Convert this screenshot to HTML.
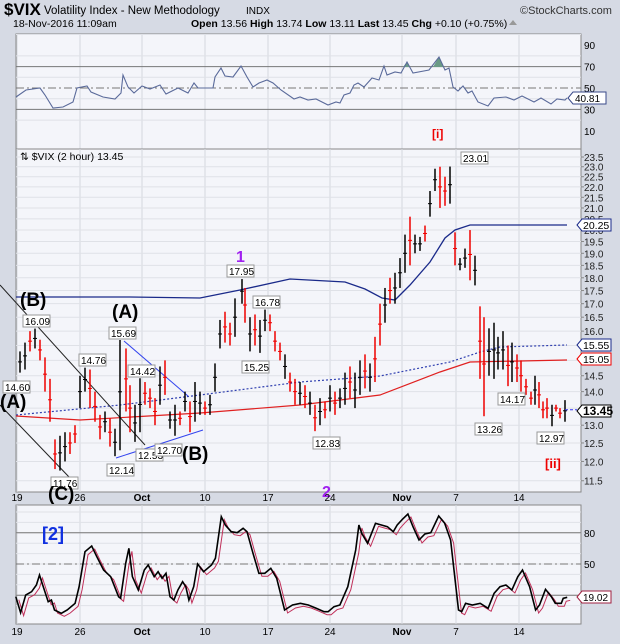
<!DOCTYPE html>
<html><head><meta charset="utf-8"><style>
body{margin:0;background:#d6dae4;width:620px;height:639px;overflow:hidden;font-family:"Liberation Sans",sans-serif}
svg text{font-family:"Liberation Sans",sans-serif}
</style></head><body>
<svg id="s" width="620" height="639" xmlns="http://www.w3.org/2000/svg">
<rect width="620" height="639" fill="#d6dae4"/>
<text x="4" y="15" font-size="17" font-weight="bold" fill="#000">$VIX</text>
<text x="44" y="14" font-size="11.5" fill="#000">Volatility Index - New Methodology</text>
<text x="246" y="14" font-size="10" fill="#000">INDX</text>
<text x="520" y="14" font-size="11" fill="#333">©StockCharts.com</text>
<text x="13" y="27" font-size="10.5" fill="#000">18-Nov-2016 11:09am</text>
<text x="191" y="27" font-size="10.5" fill="#000"><tspan font-weight="bold">Open</tspan> 13.56 <tspan font-weight="bold">High</tspan> 13.74 <tspan font-weight="bold">Low</tspan> 13.11 <tspan font-weight="bold">Last</tspan> 13.45 <tspan font-weight="bold">Chg</tspan> +0.10 (+0.75%)</text>
<polygon points="509,25 517,25 513,20" fill="#999"/>
<g id="g"></g>
</svg>
<script>
const g=document.getElementById('g');let h='';
const L=16,R=581;
const xs=[[17,'19'],[80,'26'],[142,'Oct'],[205,'10'],[268,'17'],[330,'24'],[402,'Nov'],[456,'7'],[519,'14']];
function panel(y0,y1){h+=`<rect x="${L}" y="${y0}" width="${R-L}" height="${y1-y0}" fill="#f4f5fa" stroke="#888"/>`;
 xs.forEach(([x])=>h+=`<line x1="${x}" y1="${y0}" x2="${x}" y2="${y1}" stroke="#d4d7de"/>`);}
function pts(a){return a.map(p=>p.map(v=>v.toFixed(1)).join(',')).join(' ');}
panel(34,149);
const ry=v=>88-(v-50)*1.07;
[90,70,50,30,10].forEach(v=>{h+=`<text x="584" y="${ry(v)+4}" font-size="10">${v}</text>`;});
for(let v=20;v<=100;v+=20)h+=`<line x1="${L}" y1="${ry(v)}" x2="${R}" y2="${ry(v)}" stroke="#dfe1e7"/>`;
h+=`<line x1="${L}" y1="${ry(70)}" x2="${R}" y2="${ry(70)}" stroke="#777"/><line x1="${L}" y1="${ry(30)}" x2="${R}" y2="${ry(30)}" stroke="#777"/><line x1="${L}" y1="${ry(50)}" x2="${R}" y2="${ry(50)}" stroke="#777" stroke-dasharray="8,3,2,3"/>`;
const rsi=[[16,97],[26,90],[40,88],[45,95],[53,108],[63,107],[73,102],[77,88],[87,86],[91,92],[103,97],[115,99],[121,93],[123,75],[128,87],[134,93],[142,86],[150,89],[160,85],[166,94],[178,88],[188,93],[194,83],[198,88],[213,88],[215,77],[221,68],[225,76],[233,77],[241,66],[247,77],[253,87],[259,83],[267,80],[273,83],[281,90],[294,99],[300,97],[308,100],[316,99],[328,105],[336,102],[340,103],[344,95],[350,93],[354,85],[358,83],[364,87],[372,78],[379,80],[384,66],[387,75],[395,72],[401,73],[407,62],[413,73],[429,70],[439,57],[445,70],[449,68],[453,87],[458,91],[463,86],[468,93],[472,91],[478,102],[488,106],[494,98],[506,97],[514,100],[522,96],[534,102],[541,98],[551,104],[557,99],[565,100],[567,98]];
h+=`<polygon points="403,67 407,62 410,67" fill="#6a9a86"/><polygon points="433,67 439,57 444,67" fill="#6a9a86"/>`;
h+=`<polyline points="${pts(rsi)}" fill="none" stroke="#5a6a9a" stroke-width="1.1"/>`;
h+=`<polygon points="568,98 573,92 606,92 606,104 573,104" fill="#fff" stroke="#3a4a8a"/><text x="575" y="102" font-size="10">40.81</text>`;
h+=`<text x="432" y="138" font-size="12" font-weight="bold" fill="#e00">[i]</text>`;
panel(149,492);
const py=p=>157+453*(Math.log(23.5)-Math.log(p));
for(let p=11.5;p<=23.5;p+=0.5){h+=`<line x1="${L}" y1="${py(p)}" x2="${R}" y2="${py(p)}" stroke="#dfe1e7"/><line x1="${R}" y1="${py(p)}" x2="${R+3}" y2="${py(p)}" stroke="#888"/><text x="584" y="${py(p)+4}" font-size="10" fill="#222">${p.toFixed(1)}</text>`;}
h+=`<text x="20" y="160" font-size="10.5">⇅ $VIX (2 hour) 13.45</text>`;
const up=[[16,297],[130,297],[200,298],[240,290],[290,279],[345,282],[365,289],[382,298],[395,300],[410,285],[430,262],[445,238],[455,230],[470,225],[520,225],[567,225]];
const dot=[[16,415],[120,405],[200,395],[300,382],[380,376],[450,362],[480,352],[500,347],[567,345]];
const red=[[16,416],[80,420],[200,413],[300,405],[380,395],[440,372],[470,362],[567,360]];
h+=`<polyline points="${pts(up)}" fill="none" stroke="#1a2a8a" stroke-width="1.3"/>`;
h+=`<polyline points="${pts(dot)}" fill="none" stroke="#3040b0" stroke-width="1.2" stroke-dasharray="2,2"/>`;
h+=`<polyline points="${pts(red)}" fill="none" stroke="#e02020" stroke-width="1.2"/>`;
h+=`<line x1="0" y1="285" x2="145" y2="445" stroke="#222"/><line x1="0" y1="405" x2="70" y2="478" stroke="#222"/>`;
h+=`<line x1="124" y1="341" x2="188" y2="396" stroke="#3344ee"/><line x1="116" y1="458" x2="203" y2="430" stroke="#3344ee"/>`;
const bars=[[20,14.6,15.3,0],[25,14.7,15.6,0],[30,15.3,16.0,1],[35,15.4,16.09,0],[40,15.0,15.7,1],[45,14.0,15.1,1],[50,13.1,14.4,1],[55,11.8,12.6,1],[60,11.76,12.7,0],[65,12.0,12.8,0],[70,12.2,12.8,1],[75,12.5,13.0,1],[80,13.5,14.5,0],[85,14.0,14.76,0],[90,13.5,14.7,1],[95,13.1,14.0,1],[100,12.6,13.3,1],[105,12.8,13.4,0],[110,12.4,13.2,1],[115,12.14,12.9,0],[120,12.3,15.69,0],[126,13.4,15.4,1],[130,12.8,14.2,1],[135,12.53,13.6,0],[140,12.8,14.42,0],[145,13.6,14.3,1],[150,13.5,14.1,1],[155,13.0,13.8,1],[160,13.6,14.8,0],[165,13.9,15.0,1],[170,12.9,13.4,0],[175,12.7,13.6,0],[180,13.0,13.4,1],[185,13.4,14.0,0],[190,12.8,13.7,1],[195,13.1,14.3,0],[200,13.3,14.0,0],[205,13.3,13.7,1],[210,13.3,13.9,0],[215,14.0,14.9,0],[220,15.4,16.4,0],[225,15.6,16.7,1],[230,15.5,16.3,1],[235,15.8,17.2,0],[242,17.0,17.95,0],[245,16.3,17.6,1],[250,15.3,16.5,0],[255,15.5,16.6,1],[260,15.25,16.4,0],[265,16.0,16.78,0],[270,16.0,16.6,1],[275,15.3,16.0,1],[280,15.0,15.6,1],[285,14.4,15.2,0],[290,14.0,14.6,1],[295,13.6,14.4,1],[300,13.6,14.3,0],[305,13.5,14.2,1],[310,13.3,14.0,0],[315,12.83,13.6,1],[320,13.0,13.8,0],[325,13.2,13.7,1],[330,13.4,14.2,0],[335,13.3,14.0,1],[340,13.5,14.1,0],[345,13.6,14.6,0],[350,13.8,14.8,1],[355,13.5,14.6,0],[360,13.9,15.0,0],[365,14.1,15.2,1],[370,14.0,14.9,0],[375,14.3,15.8,1],[380,15.5,17.0,1],[385,16.3,17.6,0],[390,17.0,18.0,1],[395,17.0,18.2,0],[400,17.6,18.8,0],[405,18.2,19.8,0],[410,18.5,20.6,1],[415,19.0,19.8,0],[420,19.1,19.7,0],[425,19.5,20.2,1],[430,20.6,21.8,0],[435,21.8,22.9,0],[440,21.0,23.0,1],[445,21.1,22.5,1],[450,21.2,23.01,0],[455,18.5,19.9,1],[460,18.3,18.8,0],[465,18.4,19.2,0],[470,17.9,20.0,1],[475,17.7,18.9,0],[480,14.4,16.9,1],[484,13.26,16.5,1],[489,14.5,16.1,0],[494,14.4,16.3,0],[498,14.7,15.8,0],[503,14.7,16.0,0],[508,14.17,15.5,1],[512,14.3,15.6,0],[517,14.3,15.2,1],[521,14.0,15.0,1],[526,13.9,14.4,1],[531,13.6,14.0,1],[535,13.6,14.5,0],[539,13.5,14.3,1],[543,13.2,13.7,1],[547,13.2,13.8,1],[552,12.97,13.6,0],[556,13.4,13.6,1],[560,13.2,13.5,1],[565,13.1,13.74,0]];
bars.forEach(([x,lo,hi,c])=>{const col=c?'#e00':'#000';const m=py((lo+hi)/2);h+=`<line x1="${x}" y1="${py(hi)}" x2="${x}" y2="${py(lo)}" stroke="${col}" stroke-width="1.5"/><line x1="${x-2}" y1="${m}" x2="${x+2}" y2="${m}" stroke="${col}"/>`;});
const labs=[[14.60,3,381],[16.09,23,315],[15.69,109,327],[14.76,79,354],[14.42,128,365],[11.76,51,477],[12.14,107,464],[12.53,136,449],[12.70,155,444],[17.95,227,265],[16.78,253,296],[15.25,242,361],[12.83,313,437],[23.01,461,152],[13.26,475,423],[14.17,498,393],[12.97,537,432]];
labs.forEach(([v,x,y])=>{h+=`<rect x="${x}" y="${y}" width="27" height="12" fill="#fff" stroke="#999"/><text x="${x+2}" y="${y+10}" font-size="10">${v.toFixed(2)}</text>`;});
[[0,408,'(A)'],[20,306,'(B)'],[112,318,'(A)'],[182,460,'(B)'],[48,500,'(C)']].forEach(([x,y,t])=>h+=`<text x="${x}" y="${y}" font-size="19" font-weight="bold">${t}</text>`);
h+=`<text x="236" y="262" font-size="16" font-weight="bold" fill="#a020f0">1</text><text x="322" y="497" font-size="16" font-weight="bold" fill="#a020f0">2</text><text x="545" y="468" font-size="13" font-weight="bold" fill="#e00">[ii]</text>`;
function tag(y,t,col,bold){h+=`<polygon points="577,${y} 582,${y-6} 611,${y-6} 611,${y+6} 582,${y+6}" fill="#fff" stroke="${col}"/><text x="583" y="${y+4}" font-size="${bold?12:10.5}" ${bold?'font-weight="bold"':''}>${t}</text>`;}
tag(225,'20.25','#1a2a8a');tag(345,'15.55','#1a2a8a');tag(359,'15.05','#e00');tag(411,'13.45','#000',1);
h+=`<line x1="565" y1="${py(13.45)}" x2="577" y2="${py(13.45)}" stroke="#33e" stroke-dasharray="3,2"/>`;
xs.forEach(([x,t])=>h+=`<text x="${x}" y="501" font-size="10" text-anchor="middle" ${t=='Oct'||t=='Nov'?'font-weight="bold"':''}>${t}</text>`);
panel(505,624);
const sy=v=>564-(v-50)*1.04;
for(let v=10;v<=100;v+=10)h+=`<line x1="${L}" y1="${sy(v)}" x2="${R}" y2="${sy(v)}" stroke="#dfe1e7"/>`;
h+=`<line x1="${L}" y1="${sy(80)}" x2="${R}" y2="${sy(80)}" stroke="#777"/><line x1="${L}" y1="${sy(20)}" x2="${R}" y2="${sy(20)}" stroke="#777"/><line x1="${L}" y1="${sy(50)}" x2="${R}" y2="${sy(50)}" stroke="#777" stroke-dasharray="8,3,2,3"/>`;
h+=`<text x="584" y="${sy(80)+4}" font-size="10">80</text><text x="584" y="${sy(50)+4}" font-size="10">50</text>`;
const stz=[[40,320],[52,368],[65,315],[80,305],[92,285],[100,255],[108,285],[122,335],[130,330],[138,360],[155,370],[170,360],[190,340],[200,290],[215,185],[232,168],[245,200],[262,240],[280,260],[300,320],[305,325],[318,220],[326,175],[335,260],[350,300],[365,240],[375,225],[390,260],[400,245],[410,265],[420,250],[430,320],[440,330],[450,300],[462,275],[470,290],[478,330],[490,290],[500,222],[515,245],[535,225],[545,205],[560,80],[570,105],[585,125],[600,128],[615,115],[625,125],[640,190],[655,250],[670,250],[685,235],[700,265],[720,360],[740,345],[760,340],[780,345],[800,355],[820,365],[830,365],[845,350],[860,345],[880,290],[900,180],[908,105],[915,130],[930,160],[950,100],[965,105],[980,110],[995,125],[1005,105],[1018,88],[1032,72],[1045,110],[1060,150],[1075,132],[1090,128],[1110,78],[1125,100],[1140,150],[1160,360],[1168,365],[1178,340],[1195,345],[1215,340],[1235,355],[1250,310],[1265,290],[1280,285],[1295,300],[1310,260],[1322,240],[1340,290],[1355,360],[1365,345],[1380,298],[1395,320],[1405,340],[1420,340],[1425,325],[1435,322]];
const stp=stz.map(([x,y])=>[x/2.53,y/3+490]);
h+=`<polyline points="${pts(stp.map(([x,y])=>[x+3,y+3]))}" fill="none" stroke="#c0305a" stroke-width="1"/>`;
h+=`<polyline points="${pts(stp)}" fill="none" stroke="#000" stroke-width="1.6"/>`;
h+=`<polygon points="577,597 582,591 611,591 611,603 582,603" fill="#fff" stroke="#a02040"/><text x="583" y="601" font-size="10">19.02</text>`;
h+=`<text x="42" y="540" font-size="18" font-weight="bold" fill="#1030e0">[2]</text>`;
xs.forEach(([x,t])=>h+=`<text x="${x}" y="635" font-size="10" text-anchor="middle" ${t=='Oct'||t=='Nov'?'font-weight="bold"':''}>${t}</text>`);
g.innerHTML=h;
</script>
</body></html>
